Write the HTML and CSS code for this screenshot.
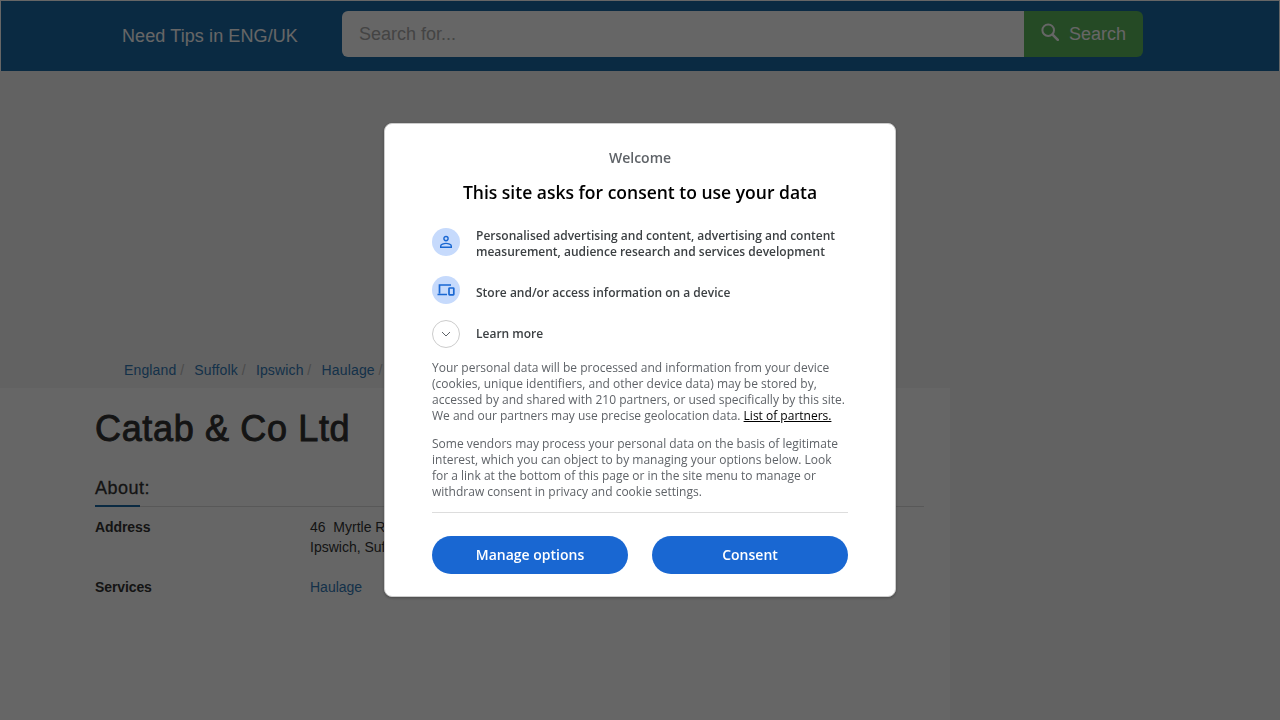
FILE: index.html
```html
<!DOCTYPE html>
<html lang="en">
<head>
<meta charset="utf-8">
<title>Catab &amp; Co Ltd</title>
<link rel="stylesheet" href="styles.css">
</head>
<body>
<header class="navbar">
  <a class="brand">Need Tips in ENG/UK</a>
  <form class="search">
    <div class="search-input">Search for...</div>
    <div class="search-btn">
      <svg class="search-icon" viewBox="0 0 18 18" width="18" height="18"><circle cx="7.2" cy="7.2" r="5.8" fill="none" stroke="currentColor" stroke-width="2"/><path d="M11.600 11.600 16.800 16.800" stroke="currentColor" stroke-width="2.600" stroke-linecap="round"/></svg>
      <span>Search</span>
    </div>
  </form>
</header>
<div class="ad-space"></div>
<nav class="crumbs">
  <a>England</a><i>/</i><a>Suffolk</a><i>/</i><a>Ipswich</a><i>/</i><a>Haulage</a><i>/</i>
</nav>
<main class="panel">
  <h1>Catab &amp; Co Ltd</h1>
  <h2 class="section"><span>About:</span></h2>
  <div class="row">
    <div class="label">Address</div>
    <div class="value">46&nbsp; Myrtle Road<br>Ipswich, Suffolk</div>
  </div>
  <div class="row">
    <div class="label">Services</div>
    <div class="value"><a>Haulage</a></div>
  </div>
</main>
<div class="overlay">
  <div class="dialog">
    <div class="welcome">Welcome</div>
    <div class="headline">This site asks for consent to use your data</div>
    <div class="purpose two">
      <span class="badge">
        <svg viewBox="0 0 14 14" width="14" height="14"><circle cx="7" cy="3.600" r="2.100" fill="none" stroke="#1967d2" stroke-width="1.400"/><path d="M1.700 12.200v-1.300c0-1.500 3-2.500 5.300-2.500s5.300 1 5.300 2.500v1.300z" fill="none" stroke="#1967d2" stroke-width="1.400"/></svg>
      </span>
      <p>Personalised advertising and content, advertising and content measurement, audience research and services development</p>
    </div>
    <div class="purpose one">
      <span class="badge">
        <svg viewBox="0 0 18 14" width="18" height="14"><path d="M2.500 10.500V2h11.500M.5 11.500h9.500" fill="none" stroke="#1967d2" stroke-width="1.700"/><rect x="12" y="5" width="4.800" height="6.800" rx=".6" fill="none" stroke="#1967d2" stroke-width="1.700"/></svg>
      </span>
      <p>Store and/or access information on a device</p>
    </div>
    <div class="purpose more">
      <span class="badge ghost">
        <svg viewBox="0 0 10 6" width="10" height="6"><path d="M1 1l4 4 4-4" fill="none" stroke="#5f6368" stroke-width="1"/></svg>
      </span>
      <p>Learn more</p>
    </div>
    <p class="copy">Your personal data will be processed and information from your device (cookies, unique identifiers, and other device data) may be stored by, accessed by and shared with 210 partners, or used specifically by this site. We and our partners may use precise geolocation data. <a>List of partners.</a></p>
    <p class="copy second">Some vendors may process your personal data on the basis of legitimate interest, which you can object to by managing your options below. Look for a link at the bottom of this page or in the site menu to manage or withdraw consent in privacy and cookie settings.</p>
    <div class="actions">
      <button>Manage options</button>
      <button>Consent</button>
    </div>
  </div>
</div>
</body>
</html>
```
FILE: styles.css
```css
* { box-sizing: border-box; }
html, body { margin: 0; height: 720px; overflow: hidden; }
body { background: #f5f5f5; font-family: "Liberation Sans", Arial, sans-serif; font-size: 14px; color: #333; }
.navbar { height: 71px; background: #1a6aa5; border: 1px solid #fff; border-bottom: 0; display: flex; align-items: center; padding: 0 0 4px 121px; }
.brand { color: #fff; font-size: 18px; letter-spacing: .1px; width: 220px; margin-top: 4px; }
.search { display: flex; height: 46px; width: 801px; }
.search-input { flex: 1; background: #fff; border-radius: 6px 0 0 6px; color: #aaa; font-size: 18px; line-height: 46px; padding-left: 17px; }
.search-btn { width: 119px; background: #5cb85c; color: #fff; font-size: 18px; border-radius: 0 6px 6px 0; display: flex; align-items: center; gap: 10px; padding-left: 17px; }
.search-icon { margin-top: -4px; }
.ad-space { height: 288px; }
.crumbs { height: 29px; padding-left: 124px; line-height: 22px; font-size: 14px; letter-spacing: .15px; display: flex; gap: 3.700px; }
.crumbs a, .value a { color: #337ab7; }
.crumbs i { font-style: normal; color: #bbb; margin-right: 6.500px; }
.panel { width: 950px; height: 332px; background: #fff; padding: 21px 26px 0 95px; }
h1 { margin: 0; font-size: 36px; line-height: 40px; font-weight: 400; letter-spacing: .65px; color: #333; -webkit-text-stroke: .9px #333; }
.section { margin: 29px 0 0; font-size: 18px; font-weight: 400; letter-spacing: .5px; line-height: 20px; height: 29px; border-bottom: 1px solid #ddd; -webkit-text-stroke: .3px #333; }
.section span { display: inline-block; height: 29px; width: 45px; border-bottom: 2px solid #1a6aa5; white-space: nowrap; }
.row { display: flex; margin-top: 10px; line-height: 20px; }
.row + .row { margin-top: 20px; }
.label { width: 215px; font-weight: 700; letter-spacing: -.1px; }
.overlay { position: fixed; inset: 0; background: rgba(0,0,0,.6); }
.dialog { position: absolute; left: 384px; top: 123px; width: 512px; height: 474px; background: #fff; border: 1px solid #ccc; border-radius: 8px; padding: 24px 47px 0; font-family: "Open Sans", sans-serif; box-shadow: 0 1px 3px rgba(0,0,0,.3); }
.welcome { text-align: center; font-size: 14px; font-weight: 600; line-height: 20px; color: #5f6368; }
.headline { text-align: center; font-size: 17.500px; font-weight: 600; line-height: 24px; color: #000; margin-top: 12px; }
.purpose { display: flex; align-items: center; gap: 16px; }
.purpose p { margin: 0; font-size: 12px; font-weight: 600; line-height: 16px; color: #3c4043; }
.two { margin-top: 24px; }
.two .badge { margin-top: -4px; }
.one { margin-top: 20px; }
.one .badge { margin-top: -4px; }
.one p { margin-top: 1px; }
.more { margin-top: 16px; }
.badge { width: 28px; height: 28px; flex: none; border-radius: 50%; background: #c6dafc; display: flex; align-items: center; justify-content: center; }
.ghost { background: #fff; border: 1px solid #ccc; }
.copy { margin: 12px 0 0; font-size: 12px; line-height: 16px; color: #5f6368; }
.copy a { color: #000; text-decoration: underline; }
.second { padding-bottom: 12px; border-bottom: 1px solid #ddd; margin-top: 12px; }
.actions { display: flex; justify-content: space-between; margin-top: 23px; }
.actions button { width: 196px; height: 38px; padding: 0 0 2px; border: 0; border-radius: 19px; background: #1967d2; color: #fff; font: 600 14px "Open Sans", sans-serif; }
```
